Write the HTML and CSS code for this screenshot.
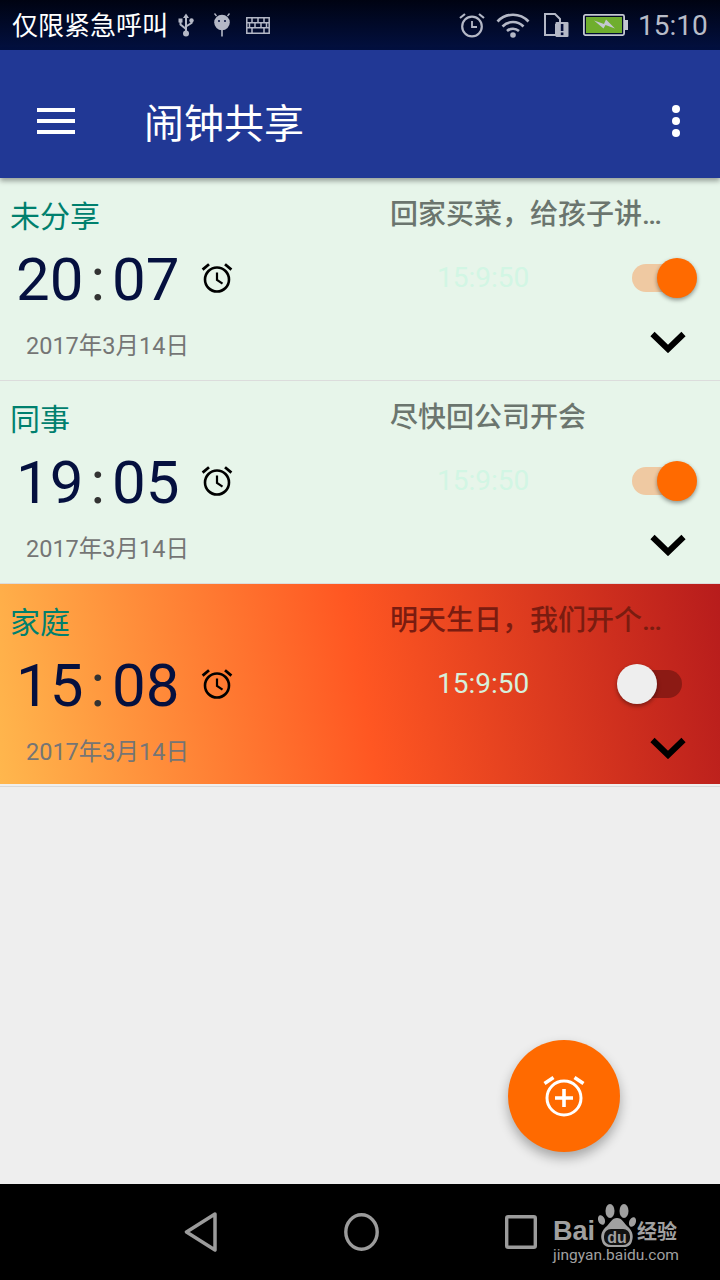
FILE: index.html
```html
<!DOCTYPE html>
<html lang="zh-CN">

<head>
    <meta charset="UTF-8">
    <meta name="viewport" content="width=device-width, initial-scale=1.0">
    <title>闹钟共享</title>
    <link rel="stylesheet" href="styles.css">
</head>

<body>
    <svg class="icon-defs" width="0" height="0">
        <symbol id="alarm" viewBox="0 0 32 32">
            <circle cx="16" cy="17.5" r="12" fill="none" stroke="currentColor" stroke-width="2.6" />
            <path d="M16 10.5v7.5l5.5 3.6" fill="none" stroke="currentColor" stroke-width="2.2" />
            <path d="M1.6 7.6 8 2.2M30.4 7.6 24 2.2" fill="none" stroke="currentColor" stroke-width="2.8" />
        </symbol>
        <symbol id="chevron" viewBox="0 0 36 22">
            <path d="M2.5 3 18 18 33.5 3" fill="none" stroke="currentColor" stroke-width="6" />
        </symbol>
    </svg>

    <div class="status-bar">
        <span class="status-text">仅限紧急呼叫</span>
        <svg class="st-usb" viewBox="0 0 16 24">
            <path d="M8 4v16M2.500 8v3.500L8 16M13.500 8v2L8 13.500" fill="none" stroke="#b4b8c6" stroke-width="2" />
            <path d="M8 .5 5 5h6z" fill="#b4b8c6" />
            <rect x=".5" y="5.500" width="4" height="4" fill="#b4b8c6" />
            <circle cx="13.500" cy="7.500" r="2.200" fill="#b4b8c6" />
            <circle cx="8" cy="20.500" r="3" fill="#b4b8c6" />
        </svg>
        <svg class="st-android" viewBox="0 0 18 24">
            <circle cx="9" cy="9.500" r="7.800" fill="#b4b8c6" />
            <path d="M3.500 3 1.500.5M14.500 3l2-2.500" stroke="#b4b8c6" stroke-width="1.300" />
            <rect x="8.200" y="17" width="1.600" height="6.500" fill="#b4b8c6" />
            <circle cx="6" cy="8" r="1" fill="#020c38" />
            <circle cx="12" cy="8" r="1" fill="#020c38" />
        </svg>
        <svg class="st-keys" viewBox="0 0 24 17">
            <path d="M.8.800h22.400v15.400H.8zM.8 5.800h22.400M.8 10.800h22.400M6 .8v5M12 .8v5M18 .8v5M3.500 5.800v5M9 5.800v5M15 5.800v5M20.500 5.800v5M6 10.800v5.400M18 10.800v5.400" fill="none" stroke="#b4b8c6" stroke-width="1.500" />
        </svg>
        <span class="status-right">
            <svg class="st-alarm" viewBox="0 0 26 26">
                <circle cx="13" cy="14.500" r="9.800" fill="none" stroke="#b4b8c6" stroke-width="2.200" />
                <path d="M13 9v6h5" fill="none" stroke="#b4b8c6" stroke-width="1.800" />
                <path d="M1 6 6 2M25 6l-5-4" fill="none" stroke="#b4b8c6" stroke-width="2.200" />
            </svg>
            <svg class="st-wifi" viewBox="0 0 34 25">
                <path d="M1.500 8.500C10-.5 24-.5 32.500 8.500M6.500 13.500C12.500 7.500 21.500 7.500 27.500 13.500M11 18c3.500-3 8.500-3 12 0" fill="none" stroke="#b4b8c6" stroke-width="2.700" />
                <circle cx="17" cy="22" r="2.800" fill="#b4b8c6" />
            </svg>
            <svg class="st-sim" viewBox="0 0 25 24">
                <path d="M1 1h10l5 5v6h-4v10H1z" fill="none" stroke="#b4b8c6" stroke-width="2" />
                <rect x="11.500" y="9" width="13" height="15" rx="1" fill="#b4b8c6" />
                <rect x="16.800" y="11" width="2.600" height="7" fill="#020c38" />
                <rect x="16.800" y="19.500" width="2.600" height="2.600" fill="#020c38" />
            </svg>
            <svg class="st-battery" viewBox="0 0 45 22">
                <rect x=".9" y=".9" width="40.200" height="20.200" rx="1.500" fill="none" stroke="#c4c8d2" stroke-width="1.800" />
                <rect x="3" y="3" width="36" height="16" fill="#6fae2e" />
                <rect x="42" y="6" width="3" height="10" fill="#c4c8d2" />
                <path d="M11 6.500 21 10l2-4.500 9 9-9.500-3.500-2 3.500z" fill="#c4c8d2" />
            </svg>
            <span class="status-clock">15:10</span>
        </span>
    </div>

    <div class="app-bar">
        <div class="menu-icon"><span></span><span></span><span></span></div>
        <div class="app-title">闹钟共享</div>
        <div class="more-icon"><span></span><span></span><span></span></div>
    </div>

    <div class="content">
        <div class="alarm">
            <div class="alarm-top">
                <div class="alarm-group">未分享</div>
                <div class="alarm-note">回家买菜，给孩子讲…</div>
            </div>
            <div class="alarm-mid">
                <div class="alarm-time"><span>20</span><span class="colon">:</span><span>07</span></div>
                <svg class="alarm-icon"><use href="#alarm" /></svg>
                <div class="alarm-left">15:9:50</div>
                <div class="switch on"><span class="track"></span><span class="thumb"></span></div>
            </div>
            <div class="alarm-bottom">
                <div class="alarm-date">2017年3月14日</div>
                <svg class="chevron"><use href="#chevron" /></svg>
            </div>
        </div>

        <div class="alarm">
            <div class="alarm-top">
                <div class="alarm-group">同事</div>
                <div class="alarm-note">尽快回公司开会</div>
            </div>
            <div class="alarm-mid">
                <div class="alarm-time"><span>19</span><span class="colon">:</span><span>05</span></div>
                <svg class="alarm-icon"><use href="#alarm" /></svg>
                <div class="alarm-left">15:9:50</div>
                <div class="switch on"><span class="track"></span><span class="thumb"></span></div>
            </div>
            <div class="alarm-bottom">
                <div class="alarm-date">2017年3月14日</div>
                <svg class="chevron"><use href="#chevron" /></svg>
            </div>
        </div>

        <div class="alarm alarm-active">
            <div class="alarm-top">
                <div class="alarm-group">家庭</div>
                <div class="alarm-note">明天生日，我们开个…</div>
            </div>
            <div class="alarm-mid">
                <div class="alarm-time"><span>15</span><span class="colon">:</span><span>08</span></div>
                <svg class="alarm-icon"><use href="#alarm" /></svg>
                <div class="alarm-left">15:9:50</div>
                <div class="switch"><span class="track"></span><span class="thumb"></span></div>
            </div>
            <div class="alarm-bottom">
                <div class="alarm-date">2017年3月14日</div>
                <svg class="chevron"><use href="#chevron" /></svg>
            </div>
        </div>

        <div class="fab">
            <svg viewBox="0 0 42 42">
                <circle cx="21" cy="23" r="17" fill="none" stroke="#fff" stroke-width="3" />
                <path d="M21 14v18M12 23h18" fill="none" stroke="#fff" stroke-width="3.600" />
                <path d="M1.500 8.500 10.500 2.500M40.500 8.500 31.500 2.500" fill="none" stroke="#fff" stroke-width="3.600" />
            </svg>
        </div>
    </div>

    <div class="nav-bar">
        <svg class="nav-back" viewBox="0 0 33 40">
            <path d="M31 2 2.500 20 31 38z" fill="none" stroke="#9b9b9b" stroke-width="3.500" stroke-linejoin="round" />
        </svg>
        <svg class="nav-home" viewBox="0 0 35 38">
            <ellipse cx="17.500" cy="19" rx="15.700" ry="17.200" fill="none" stroke="#9b9b9b" stroke-width="3.400" />
        </svg>
        <svg class="nav-recent" viewBox="0 0 32 34">
            <rect x="1.700" y="1.700" width="28.600" height="30.600" rx="1.500" fill="none" stroke="#9b9b9b" stroke-width="3.400" />
        </svg>
        <div class="watermark">
            <div class="wm-logo">
                <span class="wm-bai">Bai</span>
                <svg class="wm-paw" viewBox="0 0 39 44">
                    <ellipse cx="3.500" cy="17" rx="3.300" ry="5" fill="#a0a0a0" transform="rotate(-20 3.500 17)" />
                    <ellipse cx="12" cy="8" rx="4.500" ry="7" fill="#a0a0a0" />
                    <ellipse cx="26" cy="8" rx="4.500" ry="7" fill="#a0a0a0" />
                    <ellipse cx="34.500" cy="19" rx="3.300" ry="5" fill="#a0a0a0" transform="rotate(20 34.500 19)" />
                    <path d="M19 15c5 0 7 5 10 8 5 4 7 9 5 15-1 4-4 6-8 6H12c-4 0-7-2-8-6-2-6 0-11 5-15 3-3 5-8 10-8z" fill="#a0a0a0" />
                    <rect x="6" y="26" width="26" height="16" rx="7" fill="#111" />
                    <text x="19" y="40" class="wm-du">du</text>
                </svg>
                <span class="wm-cn">经验</span>
            </div>
            <div class="wm-url">jingyan.baidu.com</div>
        </div>
    </div>
</body>

</html>
```

FILE: styles.css
```css
* {
    box-sizing: border-box;
}

body {
    margin: 0;
    width: 720px;
    height: 1280px;
    display: flex;
    flex-direction: column;
    overflow: hidden;
    background-color: #eeeeee;
    font-family: Roboto, "Noto Sans CJK SC", sans-serif;
}

.icon-defs {
    position: absolute;
}

/* status bar */
.status-bar {
    height: 50px;
    flex: none;
    display: flex;
    align-items: center;
    padding: 0 10px 0 12px;
    background: linear-gradient(#000312, #021040);
    color: #fff;
}

.status-text {
    font-size: 26px;
    width: 154px;
    padding-bottom: 3px;
    white-space: nowrap;
}

.status-bar svg {
    display: block;
    flex: none;
}

.st-usb {
    width: 16px;
    height: 24px;
    margin-left: 12px;
}

.st-android {
    width: 18px;
    height: 24px;
    margin-left: 19px;
}

.st-keys {
    width: 24px;
    height: 17px;
    margin-left: 15px;
}

.status-right {
    margin-left: auto;
    display: flex;
    align-items: center;
}

.st-alarm {
    width: 26px;
    height: 26px;
}

.st-wifi {
    width: 34px;
    height: 25px;
    margin-left: 11px;
}

.st-sim {
    width: 25px;
    height: 24px;
    margin-left: 14px;
}

.st-battery {
    width: 45px;
    height: 22px;
    margin-left: 14px;
}

.status-clock {
    margin-left: 10px;
    font-size: 28px;
    color: #b8bcc8;
    width: 72px;
}

/* app bar */
.app-bar {
    height: 128px;
    flex: none;
    display: flex;
    align-items: center;
    padding: 14px 40px 0 37px;
    background-color: #213895;
    box-shadow: 0 3px 5px rgba(0, 0, 0, 0.35);
    position: relative;
    z-index: 1;
}

.menu-icon {
    width: 38px;
    display: flex;
    flex-direction: column;
    gap: 7px;
}

.menu-icon span {
    height: 4px;
    background-color: #fff;
}

.app-title {
    margin-left: 69px;
    font-size: 40px;
    color: #fff;
}

.more-icon {
    margin-left: auto;
    display: flex;
    flex-direction: column;
    gap: 4px;
}

.more-icon span {
    width: 8px;
    height: 8px;
    border-radius: 50%;
    background-color: #fff;
}

/* list */
.content {
    flex: 1;
    position: relative;
}

.alarm {
    height: 203px;
    padding: 0 23px 0 0;
    background-color: #e7f5ea;
    border-bottom: 1px solid #dcdcdc;
}

.alarm-active {
    background: #eeeeee linear-gradient(80deg, #ffb74d 0%, #ff5722 50%, #b71c1c 100%) no-repeat;
    background-size: 100% 200px;
    border-bottom: 1px solid #d8d8d8;
}

.alarm-top {
    display: flex;
    height: 60px;
    padding-top: 18px;
}

.alarm-group {
    width: 390px;
    padding-left: 10px;
    padding-top: 1px;
    font-size: 30px;
    line-height: 40px;
    color: #00806e;
}

.alarm-note {
    padding-top: 1px;
    font-size: 28px;
    font-weight: 500;
    line-height: 36px;
    color: #6b756e;
    white-space: nowrap;
}

.alarm-active .alarm-note {
    color: #7a1c10;
}

.alarm-mid {
    display: flex;
    align-items: center;
    height: 80px;
    padding-left: 16px;
    position: relative;
}

.alarm-time {
    width: 185px;
    padding-top: 4px;
    font-size: 60px;
    line-height: 80px;
    color: #05103f;
    display: flex;
}

.colon {
    margin: 0 7px;
    color: #333;
}

.alarm-icon {
    width: 32px;
    height: 32px;
    color: #000;
    flex: none;
}

.alarm-left {
    margin-left: 204px;
    margin-bottom: 2px;
    font-size: 28px;
    color: #d2f6e4;
}

.alarm-active .alarm-left {
    color: #d6f0dc;
}

.switch {
    position: relative;
    width: 80px;
    height: 44px;
    margin-left: auto;
    margin-top: 2px;
}

.track {
    position: absolute;
    left: 15px;
    top: 7px;
    width: 50px;
    height: 28px;
    border-radius: 14px;
    background-color: #8c1a14;
}

.thumb {
    position: absolute;
    left: 0;
    top: 1px;
    width: 40px;
    height: 40px;
    border-radius: 50%;
    background-color: #eeeeee;
    box-shadow: 0 2px 4px rgba(0, 0, 0, 0.4);
}

.switch.on .track {
    background-color: #efc9a2;
}

.switch.on .thumb {
    left: 40px;
    background-color: #ff6a00;
}

.alarm-bottom {
    display: flex;
    align-items: flex-start;
    justify-content: space-between;
    padding: 12px 11px 0 26px;
}

.alarm-date {
    font-size: 23.5px;
    line-height: 32px;
    color: #757575;
}

.chevron {
    width: 36px;
    height: 22px;
    margin-top: 1px;
    color: #000;
}

/* add button */
.fab {
    position: absolute;
    left: 508px;
    top: 862px;
    width: 112px;
    height: 112px;
    border-radius: 50%;
    background-color: #ff6a00;
    box-shadow: 0 6px 12px rgba(0, 0, 0, 0.3);
    display: flex;
    align-items: center;
    justify-content: center;
}

.fab svg {
    width: 42px;
    height: 42px;
}

/* nav bar */
.nav-bar {
    height: 96px;
    flex: none;
    position: relative;
    display: flex;
    align-items: center;
    padding-left: 184px;
    background-color: #000;
}

.nav-back {
    width: 33px;
    height: 40px;
}

.nav-home {
    width: 35px;
    height: 38px;
    margin-left: 127px;
}

.nav-recent {
    width: 32px;
    height: 34px;
    margin-left: 126px;
}

.watermark {
    position: absolute;
    left: 553px;
    top: 19px;
    color: #a0a0a0;
}

.wm-logo {
    display: flex;
    align-items: flex-end;
    height: 44px;
}

.wm-bai {
    width: 45px;
    margin-bottom: 1px;
    font-family: "Liberation Sans", sans-serif;
    font-weight: bold;
    font-size: 27px;
    line-height: 30px;
}

.wm-paw {
    width: 39px;
    height: 44px;
    flex: none;
}

.wm-du {
    font-family: "Liberation Sans", sans-serif;
    font-size: 16px;
    font-weight: bold;
    fill: #a0a0a0;
    text-anchor: middle;
}

.wm-cn {
    font-size: 20px;
    line-height: 30px;
    font-weight: bold;
}

.wm-url {
    font-size: 15.5px;
    line-height: 16px;
    white-space: nowrap;
}
```
